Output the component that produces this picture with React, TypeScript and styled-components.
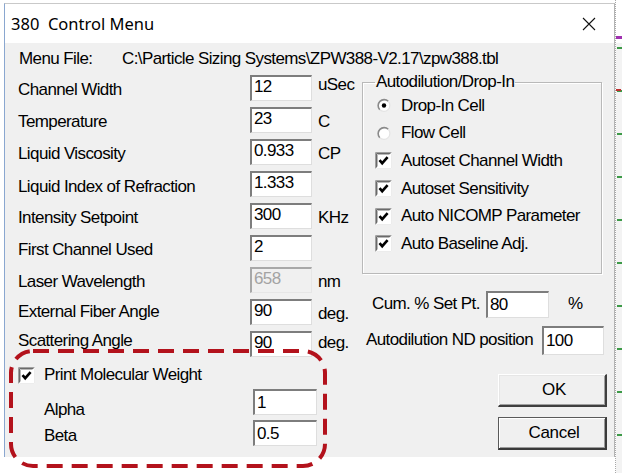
import React from "react";
import styled, { createGlobalStyle } from "styled-components";

const GlobalStyle = createGlobalStyle`
  html, body { margin: 0; padding: 0; background: #ffffff; }
  body { font-family: "Liberation Sans", Arial, sans-serif; }
  * { box-sizing: border-box; }
`;

const Page = styled.div`
  position: relative;
  width: 622px;
  height: 473px;
  overflow: hidden;
  display: flex;
  align-items: flex-start;
  padding-left: 4px;
  background: #ffffff;
`;

const Window = styled.div`
  width: 611px;
  margin-top: 3px;
  border-top: 1px solid #c9c9c9;
  border-left: 1px solid #8aa7d0;
  border-right: 1px solid #b4b4b4;
  display: flex;
  flex-direction: column;
`;

const TitleBar = styled.div`
  height: 39px;
  background: #ffffff;
  display: flex;
  align-items: center;
  padding-left: 6px;
  padding-right: 18px;
`;

const Title = styled.div`
  flex: 1;
  font-family: "Noto Sans", "Open Sans", sans-serif;
  font-size: 16.5px;
  color: #000;
  white-space: pre;
  line-height: 20px;
`;

const CloseGlyph = styled.svg`
  display: block;
`;

const Body = styled.div`
  height: 414px;
  background: #f0f0f0;
  display: flex;
  flex-direction: column;
  font-family: "Liberation Sans", Arial, sans-serif;
  font-size: 17px;
  letter-spacing: -0.6px;
  color: #000;
`;

const MenuFileRow = styled.div`
  height: 32px;
  display: flex;
  align-items: center;
  padding-left: 14px;
  line-height: 20px;
`;

const MenuFileLabel = styled.span`
  width: 103px;
`;

const Columns = styled.div`
  display: flex;
`;

const LeftCol = styled.div`
  width: 357px;
  padding-left: 13px;
  display: flex;
  flex-direction: column;
`;

const FieldGrid = styled.div`
  display: grid;
  grid-template-columns: 232px 62px auto;
  grid-auto-rows: 32px;
  align-items: start;
`;

const Label = styled.div<{ $shift?: number }>`
  line-height: 20px;
  padding-top: ${(p) => 5 + (p.$shift ?? 0)}px;
  white-space: nowrap;
  color: ${(p) => "#000"};
`;

const Unit = styled.div<{ $shift?: number }>`
  line-height: 20px;
  margin-left: 6px;
  padding-top: ${(p) => 5 + (p.$shift ?? 0)}px;
  white-space: nowrap;
`;

const Field = styled.input<{ $w?: number; $h?: number; $raised?: boolean }>`
  width: ${(p) => p.$w ?? 62}px;
  height: ${(p) => p.$h ?? 26}px;
  margin: 0;
  border-style: solid;
  border-width: 2px 1px 1px 2px;
  border-color: #7d7d7d #dedede #dedede #7d7d7d;
  background: #ffffff;
  font-family: "Liberation Sans", Arial, sans-serif;
  font-size: 17px;
  letter-spacing: -0.6px;
  color: #000;
  padding: 0 2px ${(p) => (p.$raised ? 4 : 0)}px 2px;
  outline: none;
  &:disabled {
    background: #f0f0f0;
    color: #a3a3a3;
    border-color: #a8a8a8 #e6e6e6 #e6e6e6 #a8a8a8;
  }
`;

const CheckRow = styled.label`
  display: flex;
  align-items: center;
  gap: 9px;
  height: 22px;
  margin-top: 1px;
  line-height: 20px;
  white-space: nowrap;
`;

const SubGrid = styled.div`
  display: grid;
  grid-template-columns: 209px 64px;
  grid-auto-rows: 31px;
  align-items: start;
  padding-left: 26px;
  margin-top: 3px;
`;

const RightCol = styled.div`
  width: 245px;
  display: flex;
  flex-direction: column;
`;

const GroupBox = styled.fieldset`
  margin: -3px 0 0 0;
  width: 240px;
  border: 1px solid #b9b9b9;
  box-shadow: inset 1px 1px 0 #ffffff, 1px 1px 0 #ffffff;
  padding: 0 0 15px 12px;
  min-width: 0;
`;

const Legend = styled.legend`
  padding: 0 1px;
  line-height: 20px;
`;

const OptionList = styled.div`
  display: flex;
  flex-direction: column;
`;

const Option = styled.div`
  height: 27.6px;
  display: flex;
  align-items: center;
  gap: 9px;
  line-height: 20px;
  white-space: nowrap;
`;

const Indicator = styled.svg`
  display: block;
  flex: none;
`;

const SetRow = styled.div<{ $top: number; $indent: number; $labelW: number }>`
  display: flex;
  align-items: center;
  margin-top: ${(p) => p.$top}px;
  padding-left: ${(p) => p.$indent}px;
  line-height: 20px;
  & > span:first-child {
    width: ${(p) => p.$labelW}px;
    white-space: nowrap;
  }
`;

const Percent = styled.span`
  margin-left: 19px;
`;

const ButtonStack = styled.div`
  display: flex;
  flex-direction: column;
  align-items: flex-end;
  gap: 10px;
  margin-top: 19px;
`;

const Button = styled.button<{ $default?: boolean }>`
  width: 109px;
  height: 33px;
  margin: 0;
  padding: 0 0 0 4px;
  background: #f0f0f0;
  font-family: "Liberation Sans", Arial, sans-serif;
  font-size: 17px;
  letter-spacing: -0.3px;
  color: #000;
  border-style: solid;
  border-width: 1px 2px 2px 1px;
  border-color: ${(p) =>
    p.$default ? "#5a5a5a #3a3a3a #3a3a3a #5a5a5a" : "#ffffff #3f3f3f #3f3f3f #ffffff"};
  box-shadow: ${(p) =>
    p.$default
      ? "inset 1px 1px 0 #ffffff, inset -1px -1px 0 #9a9a9a"
      : "inset 1px 1px 0 #e6e6e6, inset -1px -1px 0 #a0a0a0"};
`;

const Strip = styled.div`
  width: 7px;
  height: 473px;
  display: flex;
  flex-direction: column;
  border-left: 1px dotted #a8a8a8;
`;

const StripTop = styled.div`
  height: 43px;
  background: linear-gradient(to bottom, transparent 0 36px, #a030b0 36px 39px, transparent 39px);
`;

const StripBody = styled.div`
  flex: 1;
  background-color: #f3f3f3;
  background-image: linear-gradient(to bottom, #c03030 0 2px, transparent 2px),
    linear-gradient(to bottom, #3d9a48 0 2px, transparent 2px);
  background-size: 5px 2px, 5px 43px;
  background-repeat: no-repeat, repeat-y;
  background-position: 0 46px, 1px 4px;
`;

const Annotation = styled.svg`
  position: absolute;
  left: 9px;
  top: 349px;
  pointer-events: none;
`;

type Row = {
  label: string;
  value: string;
  unit?: string;
  disabled?: boolean;
  labelShift?: number;
  unitShift?: number;
};

const rows: Row[] = [
  { label: "Channel Width", value: "12", unit: "uSec", unitShift: -5 },
  { label: "Temperature", value: "23", unit: "C" },
  { label: "Liquid Viscosity", value: "0.933", unit: "CP" },
  { label: "Liquid Index of Refraction", value: "1.333", labelShift: 1 },
  { label: "Intensity Setpoint", value: "300", unit: "KHz" },
  { label: "First Channel Used", value: "2" },
  { label: "Laser Wavelength", value: "658", unit: "nm", disabled: true },
  { label: "External Fiber Angle", value: "90", unit: "deg.", labelShift: -2 },
  { label: "Scattering Angle", value: "90", unit: "deg.", labelShift: -6, unitShift: -3 },
];

const CheckBox: React.FC = () => (
  <Indicator width="17" height="17" viewBox="0 0 17 17">
    <rect x="0" y="0" width="17" height="17" fill="#ffffff" />
    <path d="M0.5 16.5V0.5H16.5" stroke="#a0a0a0" fill="none" />
    <path d="M1.5 15.5V1.5H15.5" stroke="#6a6a6a" fill="none" />
    <path d="M2.5 14.5V2.5H14.5" stroke="#b8b8b8" fill="none" />
    <path d="M1.5 16.5H16.5V1.5" stroke="#ececec" fill="none" />
    <path d="M4.5 8.2L7.2 11.2L12.6 5.2" stroke="#000" strokeWidth="2.6" fill="none" />
  </Indicator>
);

const Radio: React.FC<{ checked?: boolean }> = ({ checked }) => (
  <Indicator width="17" height="17" viewBox="0 0 17 17">
    <circle cx="9" cy="8.5" r="6" fill="#ffffff" />
    <path d="M4.76 12.74A6 6 0 0 1 13.24 4.26" stroke="#8a8a8a" strokeWidth="1.6" fill="none" />
    <path d="M13.24 4.26A6 6 0 0 1 4.76 12.74" stroke="#e4e4e4" strokeWidth="1.2" fill="none" />
    {checked && <circle cx="9" cy="8.5" r="2.2" fill="#000" />}
  </Indicator>
);

const options: { kind: "radio" | "check"; text: string; checked?: boolean }[] = [
  { kind: "radio", text: "Drop-In Cell", checked: true },
  { kind: "radio", text: "Flow Cell" },
  { kind: "check", text: "Autoset Channel Width" },
  { kind: "check", text: "Autoset Sensitivity" },
  { kind: "check", text: "Auto NICOMP Parameter" },
  { kind: "check", text: "Auto Baseline Adj." },
];

export default function App() {
  return (
    <>
      <GlobalStyle />
      <Page>
        <Window>
          <TitleBar>
            <Title>380  Control Menu</Title>
            <CloseGlyph width="14" height="14" viewBox="0 0 14 14">
              <path d="M1 1L13 13M13 1L1 13" stroke="#111" strokeWidth="1.1" />
            </CloseGlyph>
          </TitleBar>
          <Body>
            <MenuFileRow>
              <MenuFileLabel>Menu File:</MenuFileLabel>
              <span>C:\Particle Sizing Systems\ZPW388-V2.17\zpw388.tbl</span>
            </MenuFileRow>
            <Columns>
              <LeftCol>
                <FieldGrid>
                  {rows.map((r) => (
                    <React.Fragment key={r.label}>
                      <Label $shift={r.labelShift}>{r.label}</Label>
                      <Field readOnly $raised value={r.value} disabled={r.disabled} />
                      <Unit $shift={r.unitShift}>{r.unit ?? ""}</Unit>
                    </React.Fragment>
                  ))}
                </FieldGrid>
                <CheckRow>
                  <CheckBox />
                  <span>Print Molecular Weight</span>
                </CheckRow>
                <SubGrid>
                  <Label $shift={6}>Alpha</Label>
                  <Field readOnly $w={64} value="1" />
                  <Label $shift={1}>Beta</Label>
                  <Field readOnly $w={64} value="0.5" />
                </SubGrid>
              </LeftCol>
              <RightCol>
                <GroupBox>
                  <Legend>Autodilution/Drop-In</Legend>
                  <OptionList>
                    {options.map((o) => (
                      <Option key={o.text}>
                        {o.kind === "radio" ? <Radio checked={o.checked} /> : <CheckBox />}
                        <span>{o.text}</span>
                      </Option>
                    ))}
                  </OptionList>
                </GroupBox>
                <SetRow $top={17} $indent={10} $labelW={114}>
                  <span>Cum. % Set Pt.</span>
                  <Field readOnly $w={63} $h={27} value="80" />
                  <Percent>%</Percent>
                </SetRow>
                <SetRow $top={8} $indent={4} $labelW={176}>
                  <span>Autodilution ND position</span>
                  <Field readOnly $w={62} $h={29} value="100" />
                </SetRow>
                <ButtonStack>
                  <Button>OK</Button>
                  <Button $default>Cancel</Button>
                </ButtonStack>
              </RightCol>
            </Columns>
          </Body>
        </Window>
        <Strip>
          <StripTop />
          <StripBody />
        </Strip>
        <Annotation width="318" height="119" viewBox="0 0 318 119">
          <rect
            x="2"
            y="2"
            width="314"
            height="115"
            rx="22"
            ry="22"
            fill="none"
            stroke="#b3121c"
            strokeWidth="4"
            strokeDasharray="16 9"
          />
        </Annotation>
      </Page>
    </>
  );
}
